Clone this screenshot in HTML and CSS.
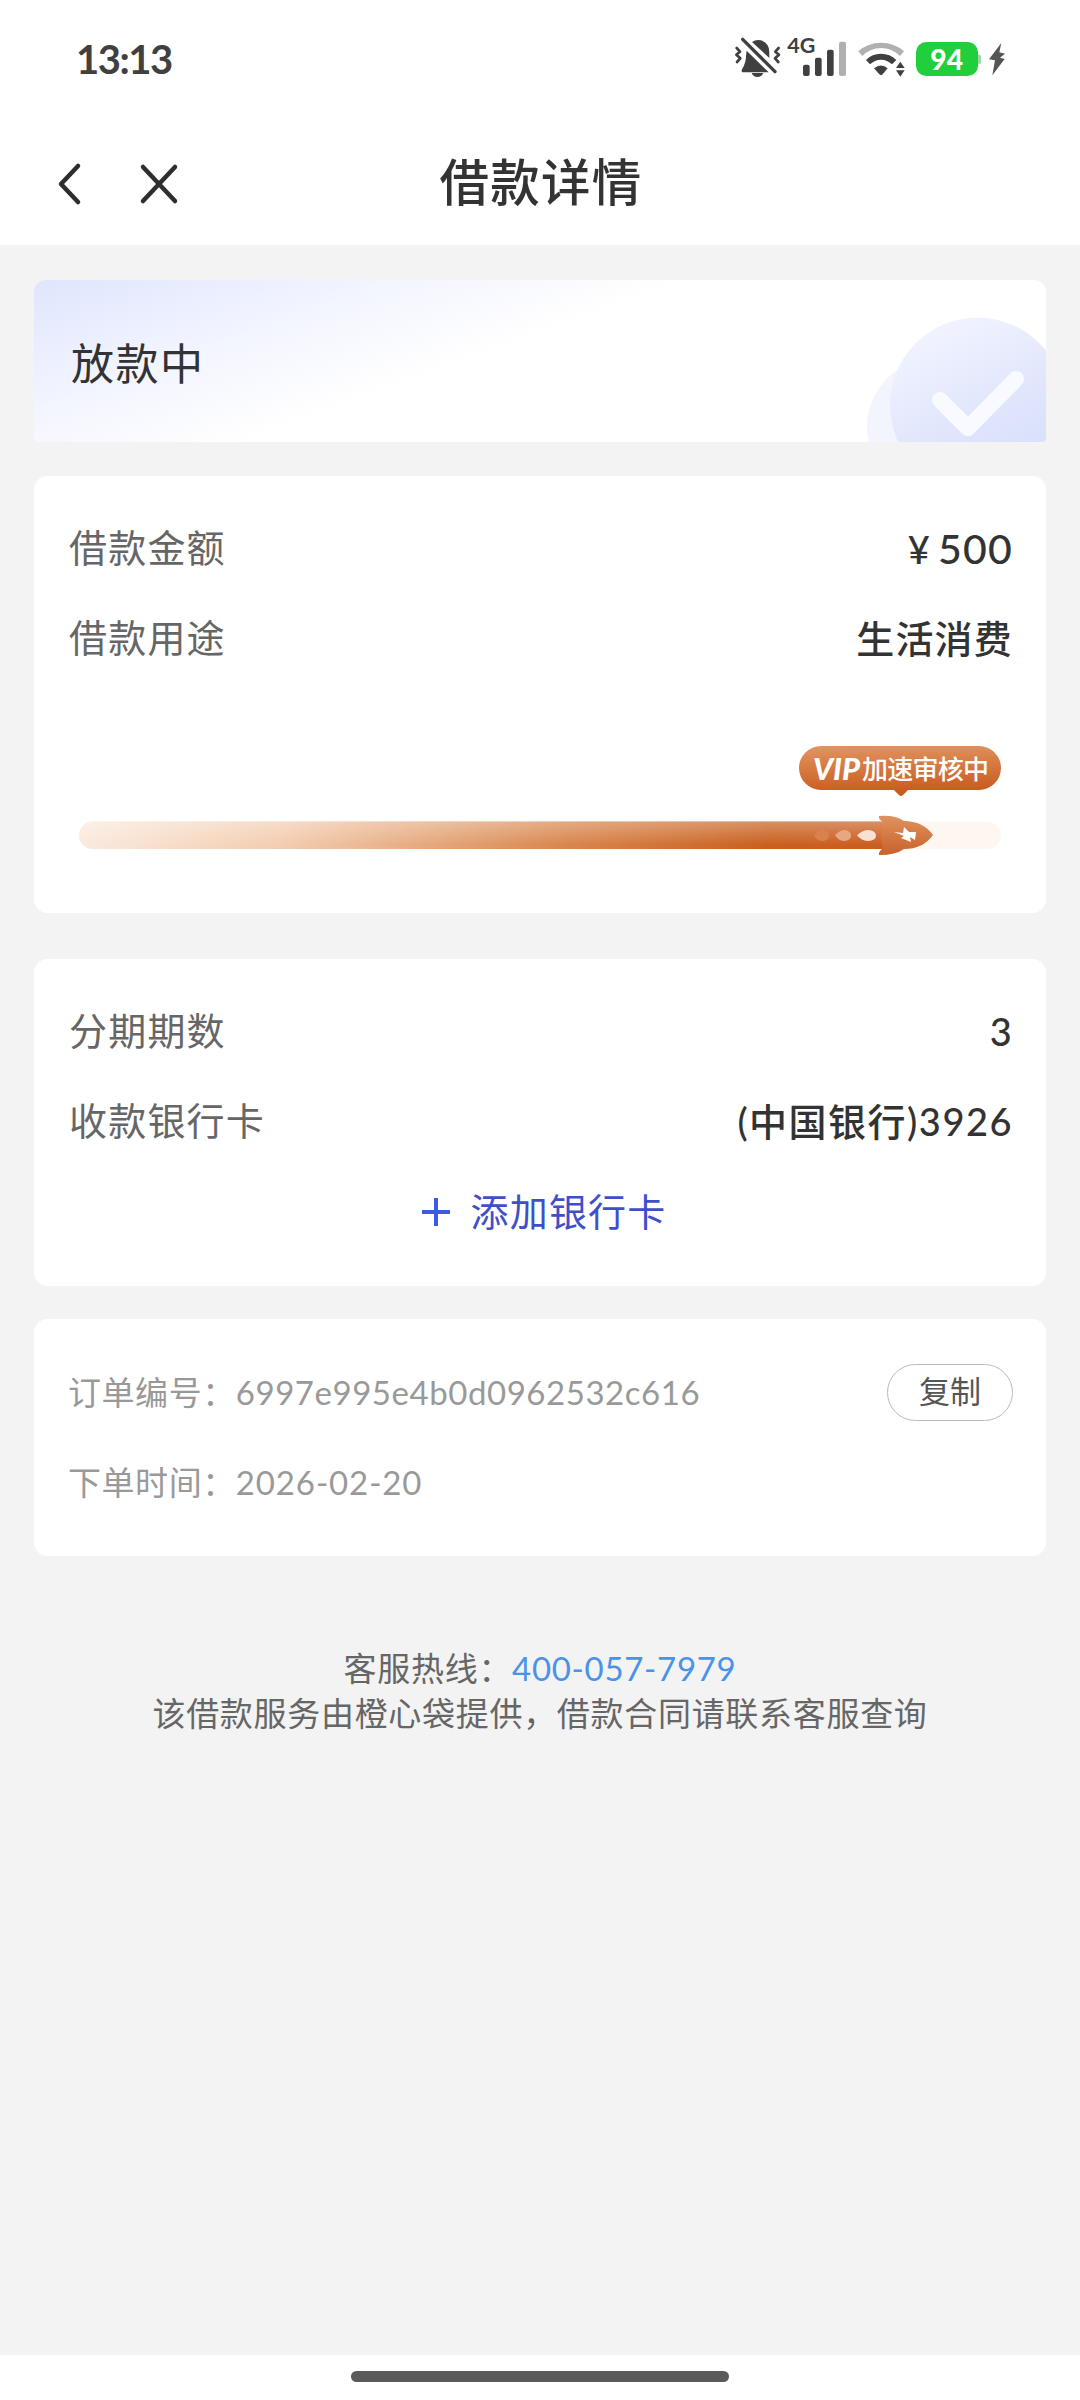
FILE: index.html
```html
<!DOCTYPE html>
<html lang="zh-CN">
<head>
<meta charset="utf-8">
<title>借款详情</title>
<link rel="stylesheet" href="styles.css">
</head>
<body>
<header class="status-bar">
  <span class="clock">13:13</span>
  <svg class="status-icons" viewBox="0 0 1020 240">
    <g fill="#404040">
      <path d="M140 92 L206 157 H128 Q122 154 127 146 Q138 128 138 108 Z"/>
      <path d="M156 66 Q168 58 182 61 Q207 68 208 96 V114 Z"/>
      <path d="M155 159 H190 Q185 171 172 171 Q160 171 155 159 Z"/>
    </g>
    <path d="M128 58 L225 155" stroke="#404040" stroke-width="10" stroke-linecap="round"/>
    <g fill="none" stroke="#404040" stroke-width="8" stroke-linecap="round" stroke-linejoin="round">
      <path d="M110 84 L120 95 L109 104 L121 115 L111 126"/>
      <path d="M236 84 L226 95 L237 104 L225 115 L235 126"/>
    </g>
    <text class="net" x="262" y="99" textLength="84" lengthAdjust="spacingAndGlyphs">4G</text>
    <g fill="#404040">
      <rect x="309" y="134" width="20" height="34" rx="6"/>
      <rect x="345" y="113" width="20" height="55" rx="6"/>
      <rect x="381" y="89" width="20" height="79" rx="6"/>
    </g>
    <rect x="417" y="65" width="21" height="103" rx="6" fill="#b0b0b0"/>
    <path d="M475 94 Q503 68 543 68 Q584 68 612 94 L600 108 Q575 84 543 84 Q511 84 487 108 Z" fill="#b0b0b0"/>
    <path d="M498 120 Q516 101 543 101 Q570 101 589 120 L576 133 Q562 119 543 119 Q524 119 510 133 Z" fill="#404040"/>
    <path d="M522 145 Q543 128 563 145 L548 163 Q543 168 538 163 Z" fill="#404040"/>
    <path d="M601 125 L614 144 H588 Z M601 170 L614 151 H588 Z" fill="#404040"/>
    <path d="M833 104 H838 Q843 104 843 110 V126 Q843 132 838 132 H833 Z" fill="#9bd8a4"/>
    <rect x="648" y="66" width="186" height="102" rx="31" fill="#20cf3b"/>
    <text class="level" x="691" y="149" textLength="98" lengthAdjust="spacingAndGlyphs">94</text>
    <path d="M904 69 L867 118 L885 121 L877 166 L914 117 L900 113 L915 101 L898 97 Z" fill="#555"/>
  </svg>
</header>
<nav class="nav">
  <svg class="nav-icons" viewBox="0 0 80 50">
    <path d="M20 7 L3 25 L20 43"/>
    <path d="M85 8 L117 42 M117 8 L85 42"/>
  </svg>
  <h1 class="title">借款详情</h1>
</nav>
<main class="page">
  <section class="banner">
    <span>放款中</span>
    <svg class="seal" viewBox="866 280 180 162">
      <defs>
        <linearGradient id="seal" x1="0.2" y1="0" x2="0.7" y2="1">
          <stop offset="0" stop-color="#f3f5ff"/><stop offset="0.55" stop-color="#e1e6fc"/><stop offset="1" stop-color="#d4ddfb"/>
        </linearGradient>
      </defs>
      <circle cx="936" cy="427" r="69" fill="#f2f4fe"/>
      <circle cx="977.5" cy="405" r="87.5" fill="url(#seal)"/>
      <path d="M940 400 L968 428 L1016 379" fill="none" stroke="#f9faff" stroke-width="16" stroke-linecap="round" stroke-linejoin="round"/>
    </svg>
  </section>

  <section class="card loan">
    <div class="row"><span class="label">借款金额</span><span class="value amount"><span class="yen">¥</span>500</span></div>
    <div class="row"><span class="label">借款用途</span><span class="value cjk">生活消费</span></div>
    <svg class="progress" viewBox="79 740 922 120">
      <defs>
        <linearGradient id="fill" x1="79" y1="0" x2="890" y2="0" gradientUnits="userSpaceOnUse">
          <stop offset="0" stop-color="#fbeadd"/><stop offset="0.25" stop-color="#f3cdb0"/><stop offset="0.6" stop-color="#d9864e"/><stop offset="0.85" stop-color="#c9601f"/><stop offset="1" stop-color="#cb5e22"/>
        </linearGradient>
        <linearGradient id="shine" x1="0" y1="0" x2="0" y2="1">
          <stop offset="0" stop-color="#fff" stop-opacity="0.3"/><stop offset="0.85" stop-color="#fff" stop-opacity="0"/>
        </linearGradient>
        <linearGradient id="tag" x1="0" y1="0" x2="0.12" y2="1">
          <stop offset="0" stop-color="#e29562"/><stop offset="1" stop-color="#c8591d"/>
        </linearGradient>
        <linearGradient id="rocket" x1="0" y1="0" x2="0" y2="1">
          <stop offset="0" stop-color="#df9360"/><stop offset="1" stop-color="#c9602a"/>
        </linearGradient>
      </defs>
      <rect x="79" y="821.5" width="922" height="27.5" rx="13.75" fill="#fef7f1"/>
      <path d="M92.75 821.5 H886 V849 H92.75 A13.75 13.75 0 0 1 92.75 821.5 Z" fill="url(#fill)"/>
      <path d="M92.75 821.5 H886 V849 H92.75 A13.75 13.75 0 0 1 92.75 821.5 Z" fill="url(#shine)"/>
      <path d="M814 835.5 Q817 830 823 830 Q829 831 829 835.5 Q829 840 823 841 Q817 841 814 835.5 Z" fill="#d9824e"/>
      <path d="M835 835.5 Q839 830 845 830 Q851 831 851 835.5 Q851 840 845 841 Q839 841 835 835.5 Z" fill="#e6a781"/>
      <path d="M857 835.5 Q862 830 869 830 Q876 831 876 835.5 Q876 840 869 841 Q862 841 857 835.5 Z" fill="#fae0d1"/>
      <path d="M879 816 Q896 815 904 821 Q923 821 933 835 Q923 849 904 849 Q896 855 879 855 Q878 852 883 848 Q880 835 883 822 Q878 819 879 816 Z" fill="url(#rocket)"/>
      <path d="M894 832 L903 833 L904 827 L909 832 L916 832 L915 840 L910 837 L911 842 L901 838 L904 836 Z" fill="#fff"/>
      <path d="M821 746 H979 A22 22 0 0 1 979 790 H908 L903 795 Q901 797 899 795 L894 790 H821 A22 22 0 0 1 821 746 Z" fill="url(#tag)"/>
      <text class="vip" x="813" y="780" textLength="47" lengthAdjust="spacingAndGlyphs">VIP</text>
      <text class="tag-text" x="862" y="779" textLength="127" lengthAdjust="spacing">加速审核中</text>
    </svg>
  </section>

  <section class="card plan">
    <div class="row"><span class="label">分期期数</span><span class="value">3</span></div>
    <div class="row"><span class="label">收款银行卡</span><span class="value cjk account">(中国银行)3926</span></div>
    <div class="row add">
      <svg class="plus" viewBox="0 0 30 30"><path d="M15 1 V29 M1 15 H29"/></svg>
      <span class="cjk">添加银行卡</span>
    </div>
  </section>

  <section class="card order">
    <div class="row"><span>订单编号：<span class="code">6997e995e4b0d0962532c616</span></span><button class="copy">复制</button></div>
    <div class="row"><span>下单时间：<span class="date">2026-02-20</span></span></div>
  </section>

  <footer class="service">
    <p>客服热线：<a class="phone">400-057-7979</a></p>
    <p>该借款服务由橙心袋提供，借款合同请联系客服查询</p>
  </footer>
</main>
<div class="home-bar"><span class="handle"></span></div>
</body>
</html>
```
FILE: styles.css
```css
* { box-sizing: border-box; }
body {
  margin: 0;
  height: 2400px;
  display: flex;
  flex-direction: column;
  background: #fff;
  color: #333;
  font-family: Lato, "Noto Sans CJK SC", sans-serif;
}
p, h1 { margin: 0; }
.status-bar {
  height: 118px;
  display: flex;
  align-items: center;
  justify-content: space-between;
  padding: 2px 40px 0 76px;
}
.clock { font-size: 40px; font-weight: 700; color: #404040; letter-spacing: -1.5px; padding-bottom: 2px; }
.status-icons { width: 340px; height: 80px; }
.net { font-size: 62px; font-weight: 700; fill: #404040; }
.level { font-size: 88px; font-weight: 900; fill: #fff; }

.nav {
  height: 127px;
  display: grid;
  grid-template-columns: 1fr auto 1fr;
  align-items: center;
  padding: 0 57px 0 58px;
}
.nav-icons {
  width: 80px;
  height: 50px;
  margin-top: 5px;
  overflow: visible;
  fill: none;
  stroke: #2e2e2e;
  stroke-width: 4.5;
  stroke-linecap: round;
  stroke-linejoin: round;
}
.title { font-size: 49.5px; font-weight: 500; letter-spacing: 1.3px; line-height: 72px; padding-left: 1px; }

.page {
  height: 2110px;
  padding: 35px 34px 0;
  background: #f3f3f3;
}
.banner {
  height: 162px;
  display: flex;
  align-items: center;
  justify-content: space-between;
  padding-left: 37px;
  border-radius: 12px 12px 4px 4px;
  overflow: hidden;
  font-size: 43px;
  letter-spacing: 1.5px;
  background: linear-gradient(160deg, #dfe5fe 0, #f3f5ff 25%, #fff 45%);
}
.banner span { padding-bottom: 1px; }
.seal { width: 180px; height: 162px; }

.card {
  margin-top: 34px;
  padding: 27px 34px 0;
  border-radius: 14px;
  background: #fff;
}
.row {
  height: 90px;
  display: flex;
  align-items: center;
  justify-content: space-between;
  font-size: 38px;
  letter-spacing: 1.2px;
}
.label { color: #666; padding: 0 0 5px 1px; }
.cjk { padding-bottom: 4px; }
.value { font-weight: 500; margin-right: -1px; }
.amount { font-size: 41px; }
.account { letter-spacing: 1.5px; }
.yen { font-size: 38px; margin-right: 7px; }
.loan { height: 437px; }
.progress { display: block; width: 922px; height: 120px; margin: 57px 0 0 11px; }
.vip { font-size: 31px; font-weight: 900; font-style: italic; fill: #fff; }
.tag-text { font-size: 26px; font-weight: 500; fill: #fff; }

.plan { height: 327px; margin-top: 46px; }
.add { justify-content: center; gap: 19px; color: #3f4fc9; padding-left: 8px; }
.plus { width: 30px; height: 30px; margin-top: 2px; stroke: #3b5be0; stroke-width: 4; }

.order { height: 237px; margin-top: 33px; padding-top: 27px; }
.order .row { font-size: 33px; letter-spacing: 0.55px; color: #999; }
.date { letter-spacing: 0.9px; }
.copy {
  width: 126px;
  height: 57px;
  margin: 2px -1px 0 0;
  padding: 0 0 5px;
  border: 1.5px solid #bbb;
  border-radius: 29px;
  background: #fff;
  color: #555;
  font: inherit;
  font-size: 31px;
  letter-spacing: 0;
}
.service {
  padding-top: 90px;
  text-align: center;
  font-size: 33px;
  line-height: 45px;
  letter-spacing: 0.7px;
  color: #666;
}
.phone { color: #4a92ea; }
.home-bar { height: 45px; display: flex; justify-content: center; padding-top: 16px; }
.handle { width: 378px; height: 11px; border-radius: 6px; background: #5a5a5a; }
```
